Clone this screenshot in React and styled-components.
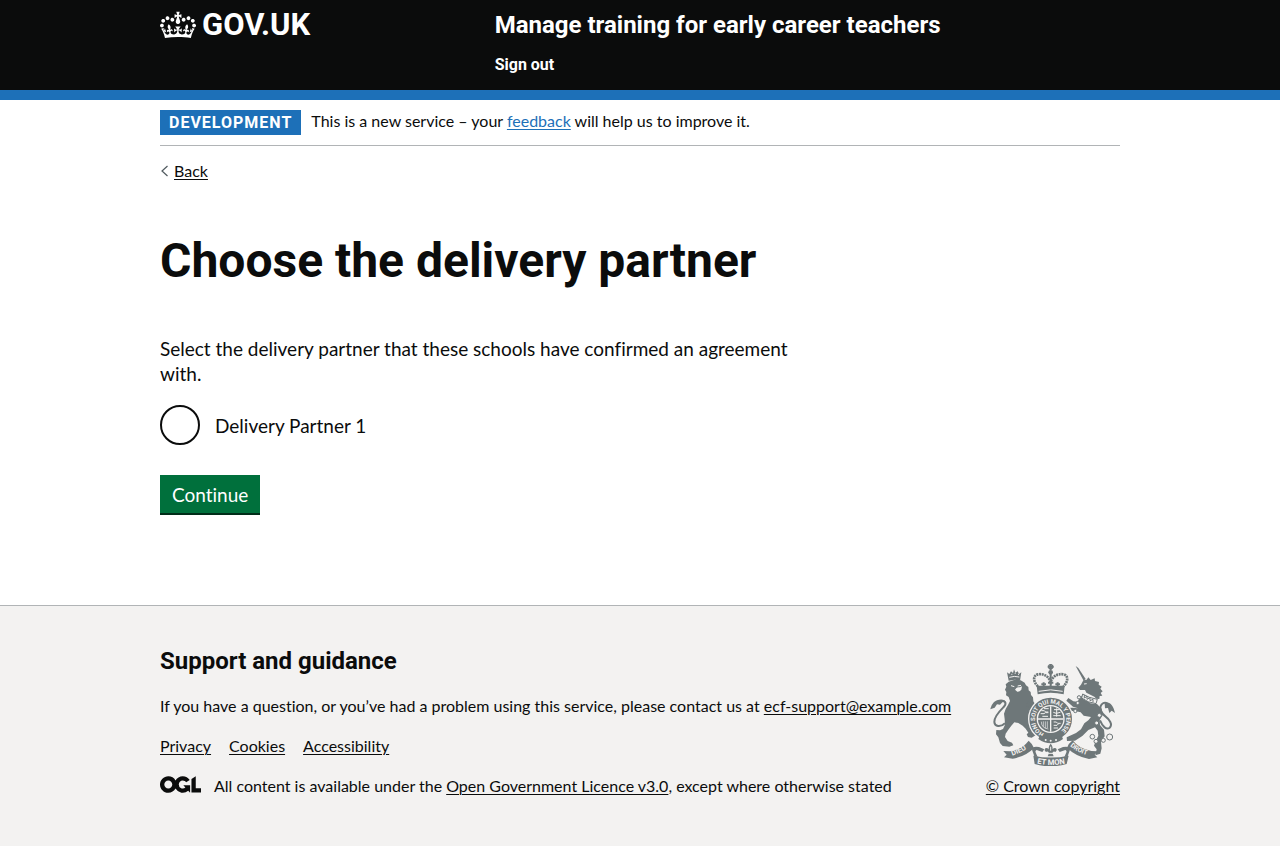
import React from "react";
import styled, { createGlobalStyle } from "styled-components";

const ink = "#0b0c0c";
const blue = "#1d70b8";
const rule = "#b1b4b6";
const regular = `Lato, "Liberation Sans", Arial, sans-serif`;
const bold = `Roboto, "Liberation Sans", Arial, sans-serif`;

const GlobalStyle = createGlobalStyle`
  *, *::before, *::after { box-sizing: border-box; }
  body {
    margin: 0;
    background: #f3f2f1;
    color: ${ink};
    font-family: ${regular};
    font-size: 16px;
    line-height: 20px;
    font-variant-ligatures: none;
    -webkit-font-smoothing: antialiased;
  }
`;

const Page = styled.div`
  display: flex;
  flex-direction: column;
  min-height: 100vh;
  background: #fff;
`;

const Container = styled.div`
  max-width: 960px;
  margin: 0 30px;
  @media (min-width: 1020px) {
    margin: 0 auto;
  }
`;

const Header = styled.header`
  background: ${ink};
  color: #fff;
  border-bottom: 10px solid ${blue};
  font-family: ${bold};
  font-weight: 700;
`;

const HeaderInner = styled(Container)`
  display: grid;
  grid-template-columns: 1fr 2fr;
  column-gap: 22px;
  padding: 10px 0 15px;
`;

const HeaderLink = styled.a`
  color: inherit;
  text-decoration: none;
  &:hover { text-decoration: underline; }
`;

const Logo = styled(HeaderLink)`
  display: flex;
  align-items: flex-start;
  gap: 6px;
  font-size: 31px;
  line-height: 30px;
`;

const HeaderContent = styled.div`
  display: flex;
  flex-direction: column;
  align-items: flex-start;
  gap: 14px;
`;

const ServiceName = styled(HeaderLink)`
  font-size: 24px;
  line-height: 30px;
`;

const SignOut = styled(HeaderLink)`
  font-size: 16px;
  line-height: 21px;
`;

const Link = styled.a`
  color: ${(p) => (p.$plain ? ink : blue)};
  text-decoration: underline;
  text-decoration-thickness: 1px;
  text-underline-offset: 2px;
`;

const PhaseBanner = styled.div`
  display: flex;
  align-items: flex-start;
  gap: 10px;
  padding: 10px 0;
  border-bottom: 1px solid ${rule};
`;

const Tag = styled.strong`
  padding: 3px 9px 2px;
  background: ${blue};
  color: #fff;
  font-family: ${bold};
  font-weight: 700;
  letter-spacing: 1px;
  text-transform: uppercase;
`;

const PhaseText = styled.span`
  padding-top: 1px;
`;

const BackRow = styled.div`
  display: flex;
  align-items: center;
  gap: 5px;
  padding-top: 15px;
`;

const Main = styled.main`
  max-width: 640px;
  padding: 52px 0 92px;
`;

const Title = styled.h1`
  margin: 0 0 48px;
  font-family: ${bold};
  font-size: 48px;
  line-height: 55px;
  font-weight: 700;
`;

const Fieldset = styled.fieldset`
  margin: 0 0 30px;
  padding: 0;
  border: 0;
  font-size: 19px;
  line-height: 25px;
`;

const Legend = styled.legend`
  margin: 0 0 19px;
  padding: 0;
`;

const RadioRow = styled.label`
  display: flex;
  align-items: center;
  gap: 15px;
`;

const Radio = styled.input`
  appearance: none;
  flex: none;
  width: 40px;
  height: 40px;
  margin: 0;
  border: 2px solid ${ink};
  border-radius: 50%;
  background: #fff;
  &:checked { box-shadow: inset 0 0 0 8px #fff; background: ${ink}; }
`;

const Button = styled.button`
  display: block;
  padding: 7px 12px 6px;
  border: 0;
  border-radius: 0;
  background: #00703c;
  box-shadow: 0 2px 0 #002d18;
  color: #fff;
  font-family: ${regular};
  font-size: 19px;
  font-variant-ligatures: none;
  line-height: 25px;
  cursor: pointer;
`;

const Footer = styled.footer`
  flex: 1;
  padding: 40px 0 50px;
  border-top: 1px solid ${rule};
  background: #f3f2f1;
`;

const FooterInner = styled(Container)`
  display: flex;
  justify-content: space-between;
  align-items: flex-end;
  gap: 30px;
`;

const FooterMeta = styled.div`
  display: flex;
  flex-direction: column;
  gap: 20px;
`;

const FooterTitle = styled.h2`
  margin: 0;
  font-family: ${bold};
  font-size: 24px;
  line-height: 30px;
  font-weight: 700;
`;

const Text = styled.p`
  margin: 0;
`;

const FooterLinks = styled.ul`
  display: flex;
  gap: 18px;
  margin: 0;
  padding: 0;
  list-style: none;
`;

const Licence = styled.div`
  display: flex;
  align-items: flex-start;
  gap: 13px;
`;

const Copyright = styled.a`
  display: flex;
  flex: none;
  flex-direction: column;
  align-items: center;
  gap: 10px;
  color: ${ink};
  text-decoration: underline;
  text-decoration-thickness: 1px;
  text-underline-offset: 2px;
`;

const CrownIcon = () => (
  <svg width="36" height="30" viewBox="0 0 132 97" aria-hidden="true">
    <path
      fill="currentColor"
      fillRule="evenodd"
      d="M25 30.2c3.5 1.5 7.7-.2 9.1-3.7 1.5-3.6-.2-7.8-3.9-9.2-3.6-1.4-7.6.3-9.1 3.9-1.4 3.5.3 7.5 3.9 9zM9 39.5c3.6 1.5 7.8-.2 9.2-3.7 1.5-3.6-.2-7.8-3.9-9.1-3.6-1.5-7.6.2-9.1 3.8-1.4 3.5.3 7.5 3.8 9zM4.4 57.2c3.5 1.5 7.7-.2 9.1-3.8 1.5-3.6-.2-7.7-3.9-9.1-3.5-1.5-7.6.3-9.1 3.8-1.4 3.5.3 7.6 3.9 9.1zm38.3-21.4c3.5 1.5 7.7-.2 9.1-3.8 1.5-3.6-.2-7.7-3.9-9.1-3.6-1.5-7.6.3-9.1 3.8-1.3 3.6.4 7.7 3.9 9.1zm64.4-5.6c-3.6 1.5-7.8-.2-9.1-3.7-1.5-3.6.2-7.8 3.8-9.2 3.6-1.4 7.7.3 9.2 3.9 1.3 3.5-.4 7.5-3.9 9zm15.9 9.3c-3.6 1.5-7.7-.2-9.1-3.7-1.5-3.6.2-7.8 3.7-9.1 3.6-1.5 7.7.2 9.2 3.8 1.5 3.5-.3 7.5-3.8 9zm4.7 17.7c-3.6 1.5-7.8-.2-9.2-3.8-1.5-3.6.2-7.7 3.9-9.1 3.6-1.5 7.7.3 9.2 3.8 1.3 3.5-.4 7.6-3.9 9.1zM89.3 35.8c-3.6 1.5-7.8-.2-9.2-3.8-1.4-3.6.2-7.7 3.9-9.1 3.6-1.5 7.7.3 9.2 3.8 1.4 3.6-.3 7.7-3.9 9.1zM69.7 17.7l8.9 4.7V9.3l-8.9 2.8c-.2-.3-.5-.6-.9-.9L72.4 0H59.6l3.5 11.2c-.3.3-.6.5-.9.9l-8.8-2.8v13.1l8.8-4.7c.3.3.6.7.9.9l-5 15.4v.1c-.2.8-.4 1.6-.4 2.4 0 4.1 3.1 7.5 7 8.1h.2c.3 0 .7.1 1 .1.4 0 .7 0 1-.1h.2c4-.6 7.1-4.1 7.1-8.1 0-.8-.1-1.7-.4-2.4V34l-5.1-15.4c.4-.2.7-.6 1-.9zM66 92.8c16.9 0 32.8 1.1 47.1 3.2 4-16.9 8.9-26.7 14-33.5l-9.6-3.4c1 4.9 1.1 7.2 0 10.2-1.5-1.4-3-4.3-4.2-8.7L108.6 76c2.8-2 5-3.2 7.5-3.3-4.4 9.4-10 11.9-13.6 11.2-4.3-.8-6.3-4.6-5.6-7.9 1-4.7 5.7-5.9 8-.5 4.3-8.7-3-11.4-7.6-8.8 7.1-7.2 7.9-13.5 2.1-21.1-8 6.1-8.1 12.3-4.5 20.8-4.7-5.4-12.1-2.5-9.5 6.2 3.4-5.2 7.9-2 7.2 3.1-.6 4.3-6.4 7.8-13.5 7.2-10.3-.9-10.9-8-11.2-13.8 2.5-.5 7.1 1.8 11 7.3L80.2 60c-4.1 4.4-8 5.3-12.3 5.4 1.4-4.4 8-11.6 8-11.6H55.5s6.4 7.2 7.9 11.6c-4.2-.1-8-1-12.3-5.4l1.4 16.4c3.9-5.5 8.5-7.7 10.9-7.3-.3 5.8-.9 12.8-11.1 13.8-7.2.6-12.9-2.9-13.5-7.2-.7-5 3.8-8.3 7.1-3.1 2.7-8.7-4.6-11.6-9.4-6.2 3.7-8.5 3.6-14.7-4.6-20.8-5.8 7.6-5 13.9 2.2 21.1-4.7-2.6-11.9.1-7.7 8.8 2.3-5.5 7.1-4.2 8.1.5.7 3.3-1.3 7.1-5.7 7.9-3.5.7-9-1.8-13.5-11.2 2.5.1 4.7 1.3 7.5 3.3l-4.7-15.4c-1.2 4.4-2.7 7.2-4.3 8.7-1.1-3-.9-5.3 0-10.2l-9.5 3.4c5 6.9 9.9 16.7 14 33.5 14.8-2.1 30.8-3.2 47.7-3.2z"
    />
  </svg>
);

const BackArrow = () => (
  <svg width="9" height="12" viewBox="0 0 9 12" aria-hidden="true">
    <path d="M7.5 1L2 6l5.500 5" fill="none" stroke="#505a5f" strokeWidth="1.2" />
  </svg>
);

const LicenceLogo = () => (
  <svg width="41" height="17" viewBox="0 0 483.2 195.7" role="img" aria-label="Open Government Licence">
    <path
      fill="currentColor"
      d="M421.5 142.8V.1l-50.7 32.3v161.1h112.4v-50.7zm-122.3-9.6A47.12 47.12 0 0 1 221 97.8c0-26 21.1-47.1 47.1-47.1 16.7 0 31.4 8.700 39.7 21.8l42.7-27.2A97.63 97.63 0 0 0 268.1 0c-36.5 0-68.3 20.1-85.1 49.7A98 98 0 0 0 97.8 0C43.9 0 0 43.9 0 97.8s43.9 97.8 97.8 97.8c36.5 0 68.3-20.1 85.1-49.7a97.76 97.76 0 0 0 149.6 25.4l19.4 22.2h3v-87.8h-80l24.3 27.5zM97.8 145c-26 0-47.1-21.1-47.1-47.1s21.1-47.1 47.1-47.1 47.1 21.1 47.1 47.1S123.8 145 97.8 145"
    />
  </svg>
);

const g = "#6e7779";
const paper = "#f3f2f1";

const CrestText = styled.text`
  fill: ${paper};
  font-family: ${bold};
  font-weight: 700;
  font-size: ${(p) => p.$size}px;
`;

const Crest = () => (
  <svg width="125" height="102" viewBox="36 27 375 306" aria-hidden="true">
    <defs>
      <path id="garter" d="M198 235A47 47 0 1 1 238 235" />
      <path id="scrollLeft" d="M103 302Q135 292 158 272" />
      <path id="scrollMid" d="M174 325Q218 335 264 325" />
      <path id="scrollRight" d="M276 273Q300 295 336 303" />
    </defs>

    {/* lion */}
    <g fill={g}>
      <path d="M92 77L87 52l7 5 5-8 6 5 3-11 4 10 7-4 4 8 7-5-4 25-16-3z" />
      <path d="M92 80l18-6 18 2 12 7 4 8 7 5 1 10 6 5 1 9 6 7 1 12 5 8 5 12-2 11-11 8-5 10-4 10 2 12 10 10 9 9-1 11-13 8-11-2-4-8 5-5-8-12-9-9-13-8-12-2-9 10-9 12-8 12-2 10 8 12 13 5 4 8-12 4-20-2-8-9-5-17-7-9 1-13 11 1 9-4 6-13-1-17-2-16 5-14 7-12 6-12-4-12-8-5 1-10-4-7 4-9-2-7z" />
      <path d="M148 138l14 10 14 6-2 9-14-2-14-8z" />
      <path d="M37 163c3-12 8-22 20-27 12-5 24-3 28 7l-9-4-10 10-9-1-7 10z" />
    </g>
    <path d="M68 138c16-2 18 9 9 18-12 12-29 28-28 45 1 14 18 17 32 4" fill="none" stroke={g} strokeWidth="6" />
    <path d="M111 104q5-9 14-7l7-3-2 10q-6 7-12 6z" fill={paper} />
    <path d="M99 92l10 3M119 93l10-2" stroke={paper} strokeWidth="3" fill="none" />
    <path d="M94 67q15-5 30-1M100 58h3M110 55h3M120 58h3" stroke={paper} strokeWidth="3" fill="none" />

    {/* unicorn */}
    <g fill={g}>
      <path d="M293 33l8 6 22 33-6 5z" />
      <path d="M316 76l10-2 5-7 7 8 12-5 1 8 12 3-1 8 9 6-4 6 7 8-6 5 5 8-8 1-1 9-9-1-6-6-24-12-4-8-15 0-5-7 8-9z" />
      <path d="M314 120l-8 8-8 12-12-1-15-10-6 8 20 18 15 5-16-2-16 1 3 11 17-3 20 5 9 10 22 4-8 10-12 9-10 18-15 11-28 13 1 11 24-1 22-14 18-18 20-8 8 10 2 15-8 16-5 14 8 11-4 18 15-5 4-16-2-20 11-16-2-20-12-14-1-15 9-14-3-20-14-14-20-2z" />
      <path d="M380 146c10-10 26 1 31 28l-10-7-7 7-4-15-9 1z" />
    </g>
    <path d="M366 196c8 19 19 30 29 22 10-9-1-25-12-33-11-8-22-25-12-37 9-9 20-4 24 6" fill="none" stroke={g} strokeWidth="6" />
    <path d="M314 117q18 12 44 16l-4 13q-25-3-43-17z" fill={paper} stroke={g} strokeWidth="3" />
    <path d="M319 120v9l8-5v9l9-5v9l9-4v9" fill="none" stroke={g} strokeWidth="3" />
    <path d="M318 87l8-1" stroke={paper} strokeWidth="3" />
    <g fill={paper} stroke={g} strokeWidth="3">
      <circle cx="303" cy="127" r="5" />
      <circle cx="299" cy="144" r="5" />
      <circle cx="364" cy="181" r="6" />
      <circle cx="356" cy="204" r="6" />
      <circle cx="343" cy="245" r="7" />
      <circle cx="354" cy="259" r="6" />
      <circle cx="376" cy="256" r="6" />
      <circle cx="395" cy="246" r="9" />
      <circle cx="292" cy="168" r="5" />
    </g>

    {/* garter and shield */}
    <circle cx="218" cy="192" r="68" fill={paper} />
    <circle cx="218" cy="192" r="53" fill="none" stroke={g} strokeWidth="22" />
    <circle cx="218" cy="192" r="38" fill={g} />
    <g stroke={paper} strokeWidth="3" fill="none">
      <path d="M218 154v76M180 192h76" strokeWidth="4" />
      <path d="M190 167h9l4 4h8M188 176h10l4-3h9M193 184h17M198 161h14" />
      <path d="M228 164h16M226 172l9 3 12-3M226 182h22M236 160v25" />
      <path d="M190 200q0 19 21 22M196 199v16M202 199v21M208 199v20" strokeWidth="2" />
      <path d="M227 201h8l4 4h9M227 211h10l4-4M227 219h13" />
    </g>
    <CrestText $size="18">
      <textPath href="#garter" startOffset="0">HONI SOIT QUI MAL Y PENSE</textPath>
    </CrestText>
    <path d="M186 240q32 20 64 0l5 12q-37 26-74 0z" fill={g} />
    <circle cx="203" cy="255" r="3" fill={paper} />
    <circle cx="218" cy="257" r="3" fill={paper} />
    <circle cx="234" cy="255" r="3" fill={paper} />

    {/* imperial crown */}
    <path d="M179 118l-3-26h84l-3 26q-39-9-78 0z" fill={g} />
    <path d="M182 109q36-9 72 0" stroke={paper} strokeWidth="3" fill="none" />
    <path d="M180 94c-15-13-16-33 0-36 20-3 34 9 38 23 4-14 18-26 38-23 16 3 15 23 0 36" fill="none" stroke={g} strokeWidth="8" strokeDasharray="6 2" />
    <path d="M218 52v44M197 82v15M239 82v15M190 88h14M232 88h14M210 83h16" stroke={g} strokeWidth="6" />
    <circle cx="218" cy="52" r="7" fill={g} />
    <path d="M218 27v18M209 35h18" stroke={g} strokeWidth="6" />
    <circle cx="218" cy="35" r="6" fill="none" stroke={g} strokeWidth="4" />

    {/* motto scroll */}
    <g fill={g}>
      <path d="M76 288l20 1q35-5 56-32 12 10 16 22-25 26-64 32l-26-4 8-8z" />
      <path d="M360 289l-20-1q-38-7-56-32-13 10-17 22 26 26 66 34l25-5-8-8z" />
      <path d="M166 302q52 11 106 0l-6 25q-49 14-96 0z" />
      <path d="M169 304l-7-20q1-12 21-8l16 7-6 8-17-6q-6 2-2 10l5 11zM269 304l7-20q-1-12-21-8l-16 7 6 8 17-6q6 2 2 10l-5 11z" />
      <path d="M218 266q10 11 3 22 3-12 13-8 5 6-2 11-5-4-9 3l4 10h-18l4-10q-4-7-9-3-7-5-2-11 10-4 13 8-7-11 3-22z" />
    </g>
    <path d="M218 275v12M211 295h14" stroke={paper} strokeWidth="3" />
    <CrestText $size="22">
      <textPath href="#scrollLeft">DIEU</textPath>
    </CrestText>
    <CrestText $size="23">
      <textPath href="#scrollMid" startOffset="3">ET MON</textPath>
    </CrestText>
    <CrestText $size="20">
      <textPath href="#scrollRight">DROIT</textPath>
    </CrestText>
  </svg>
);

export default function App() {
  return (
    <Page>
      <GlobalStyle />
      <Header>
        <HeaderInner>
          <Logo href="#">
            <CrownIcon />
            <span>GOV.UK</span>
          </Logo>
          <HeaderContent>
            <ServiceName href="#">Manage training for early career teachers</ServiceName>
            <SignOut href="#">Sign out</SignOut>
          </HeaderContent>
        </HeaderInner>
      </Header>

      <div>
        <Container>
          <PhaseBanner>
            <Tag>Development</Tag>
            <PhaseText>
              This is a new service – your <Link href="#">feedback</Link> will help us to improve it.
            </PhaseText>
          </PhaseBanner>
          <BackRow>
            <BackArrow />
            <Link $plain href="#">Back</Link>
          </BackRow>
          <Main>
            <Title>Choose the delivery partner</Title>
            <form onSubmit={(e) => e.preventDefault()}>
              <Fieldset>
                <Legend>Select the delivery partner that these schools have confirmed an agreement with.</Legend>
                <RadioRow htmlFor="partner-1">
                  <Radio type="radio" id="partner-1" name="partner" />
                  Delivery Partner 1
                </RadioRow>
              </Fieldset>
              <Button type="submit">Continue</Button>
            </form>
          </Main>
        </Container>
      </div>

      <Footer>
        <FooterInner>
          <FooterMeta>
            <FooterTitle>Support and guidance</FooterTitle>
            <Text>
              If you have a question, or you’ve had a problem using this service, please contact us at{" "}
              <Link $plain href="mailto:ecf-support@example.com">ecf-support@example.com</Link>
            </Text>
            <FooterLinks>
              <li><Link $plain href="#">Privacy</Link></li>
              <li><Link $plain href="#">Cookies</Link></li>
              <li><Link $plain href="#">Accessibility</Link></li>
            </FooterLinks>
            <Licence>
              <LicenceLogo />
              <span>
                All content is available under the <Link $plain href="#">Open Government Licence v3.0</Link>, except
                where otherwise stated
              </span>
            </Licence>
          </FooterMeta>
          <Copyright href="#">
            <Crest />
            <span>© Crown copyright</span>
          </Copyright>
        </FooterInner>
      </Footer>
    </Page>
  );
}
